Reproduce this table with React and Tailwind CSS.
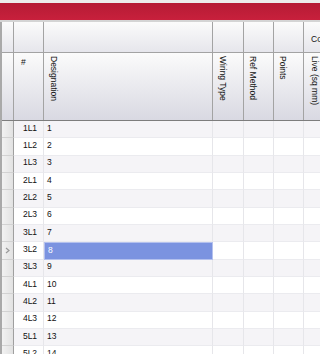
import React from 'react';

const rows = [
  ['1L1', '1'], ['1L2', '2'], ['1L3', '3'],
  ['2L1', '4'], ['2L2', '5'], ['2L3', '6'],
  ['3L1', '7'], ['3L2', '8'], ['3L3', '9'],
  ['4L1', '10'], ['4L2', '11'], ['4L3', '12'],
  ['5L1', '13'], ['5L2', '14'],
];

const selected = 7;

function Chevron() {
  return (
    <svg width="5" height="7" viewBox="0 0 5 7" className="text-[#9a9a9a]">
      <polyline points="1,1 4,3.5 1,6" fill="none" stroke="currentColor" strokeWidth="1.2" />
    </svg>
  );
}

function VHead({ children, className = '' }) {
  return (
    <div className={`h-full border-r border-[#a3a3a3] pt-[3px] ${className}`}>
      <span className="[writing-mode:vertical-rl] leading-[10px] text-[8.5px] text-[#111] whitespace-nowrap">{children}</span>
    </div>
  );
}

export default function App() {
  return (
    <div className="w-[320px] h-[354px] overflow-hidden bg-white font-['Liberation_Sans',Arial,sans-serif]">
      <div className="h-[3px] bg-[#ececec]" />
      <div className="h-[17px] bg-gradient-to-b from-[#b51b35] to-[#c8203c]" />
      <div className="h-[2px] bg-[#d4d4d4]" />

      <div className="border-l-2 border-[#a9a9a9]">
        {/* group header row */}
        <div className="flex h-[31px] border-b border-[#a3a3a3] bg-gradient-to-b from-[#fbfbfb] to-[#e6e6ec]">
          <div className="w-[12px] shrink-0 border-r border-[#a3a3a3]" />
          <div className="w-[30px] shrink-0 border-r border-[#a3a3a3]" />
          <div className="w-[169px] shrink-0 border-r border-[#a3a3a3]" />
          <div className="w-[31px] shrink-0 border-r border-[#a3a3a3]" />
          <div className="w-[30px] shrink-0 border-r border-[#a3a3a3]" />
          <div className="w-[30px] shrink-0 border-r border-[#a3a3a3]" />
          <div className="flex-1 min-w-0 overflow-hidden pl-[7px] pt-[11px] text-[8.5px] text-[#111] whitespace-nowrap">Conductor</div>
        </div>

        {/* column header row */}
        <div className="flex h-[68px] border-b border-[#7d7d7d] bg-gradient-to-b from-[#fbfbfb] to-[#d9d9e2]">
          <div className="w-[12px] shrink-0 border-r border-[#a3a3a3]" />
          <div className="w-[30px] shrink-0 border-r border-[#a3a3a3] pl-[7px] pt-[3px] text-[8.5px] text-[#111]">#</div>
          <VHead className="w-[169px] shrink-0 pl-[5px]">Designation</VHead>
          <VHead className="w-[31px] shrink-0 pl-[5px]">Wiring Type</VHead>
          <VHead className="w-[30px] shrink-0 pl-[4px]">Ref Method</VHead>
          <VHead className="w-[30px] shrink-0 pl-[4px]">Points</VHead>
          <div className="flex-1 pl-[6px] pt-[3px]">
            <span className="[writing-mode:vertical-rl] leading-[10px] text-[8.5px] text-[#111] whitespace-nowrap">Live (sq mm)</span>
          </div>
        </div>

        {/* data rows */}
        {rows.map(([id, name], i) => {
          const stripe = i % 2 === 0 ? 'bg-[#f5f4f7]' : 'bg-white';
          const isSel = i === selected;
          return (
            <div key={id} className="flex h-[17.33px] text-[8.5px] text-[#111]">
              <div className="w-[12px] shrink-0 flex items-center pl-[3px] bg-gradient-to-r from-[#f2f2f2] to-[#e2e2e2] border-r border-[#9f9f9f] border-b border-b-[#d2d2d2]">
                {isSel && <Chevron />}
              </div>
              <div className={`w-[30px] shrink-0 flex items-center justify-center pl-[3px] pb-[2px] ${stripe} border-r border-[#e6e6ea] border-b border-b-[#ebebef]`}>
                {id}
              </div>
              {isSel ? (
                <div className="w-[169px] shrink-0 flex items-center pl-[3px] pb-[2px] bg-[#7b93e0] text-white border border-[#b4c1ee]">
                  {name}
                </div>
              ) : (
                <div className={`w-[169px] shrink-0 flex items-center pl-[3px] pb-[2px] ${stripe} border-r border-[#e6e6ea] border-b border-b-[#ebebef]`}>
                  {name}
                </div>
              )}
              <div className={`w-[31px] shrink-0 ${stripe} border-r border-[#e6e6ea] border-b border-b-[#ebebef]`} />
              <div className={`w-[30px] shrink-0 ${stripe} border-r border-[#e6e6ea] border-b border-b-[#ebebef]`} />
              <div className={`w-[30px] shrink-0 ${stripe} border-r border-[#e6e6ea] border-b border-b-[#ebebef]`} />
              <div className={`flex-1 ${stripe} border-b border-b-[#ebebef]`} />
            </div>
          );
        })}
      </div>
    </div>
  );
}
